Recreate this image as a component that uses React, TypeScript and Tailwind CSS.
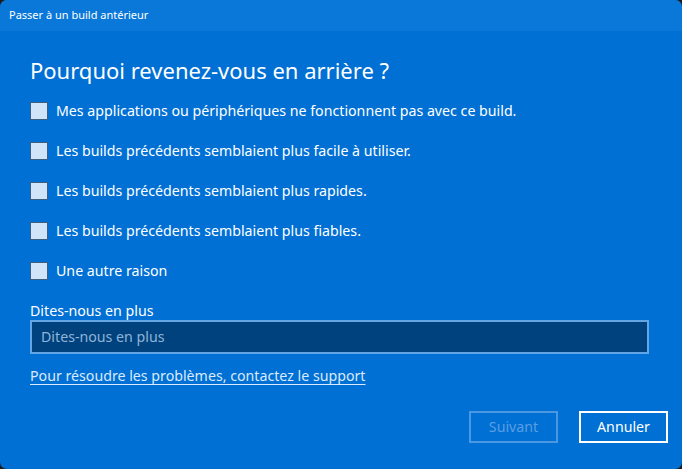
import React from 'react';

const reasons = [
  'Mes applications ou périphériques ne fonctionnent pas avec ce build.',
  'Les builds précédents semblaient plus facile à utiliser.',
  'Les builds précédents semblaient plus rapides.',
  'Les builds précédents semblaient plus fiables.',
  'Une autre raison',
];

export default function App() {
  return (
    <div className="w-[682px] h-[469px] bg-[#1c1c1c] overflow-hidden">
      <div
        className="w-[682px] h-[469px] rounded-[7px] overflow-hidden bg-[#0070d4] text-white flex flex-col"
        style={{ fontFamily: '"Noto Sans", "Open Sans", sans-serif' }}>
        {/* Title bar */}
        <div className="h-[31px] shrink-0 bg-[#0a78d8] flex items-center pl-[9px] text-[11px] text-white">
          Passer à un build antérieur
        </div>

        <div className="flex-1 flex flex-col px-[30px]">
          <h1 className="mt-[24px] text-[22px] leading-[30px] font-normal">
            Pourquoi revenez-vous en arrière ?
          </h1>

          <div className="mt-[16px] flex flex-col gap-[21px]">
            {reasons.map((r) =>
            <label key={r} className="flex items-center gap-[8px] h-[19px]">
                <span className="w-[18px] h-[18px] bg-[#cfe4f8] border border-[#3e5f82] shrink-0" />
                <span className="text-[14.2px] leading-[19px] text-white">{r}</span>
              </label>
            )}
          </div>

          <div className="mt-[22px] text-[14.2px] leading-[18px]">Dites-nous en plus</div>
          <div className="mt-0 w-[619px] h-[34px] bg-[#00427e] border-2 border-[#63a6e6] flex items-center px-[9px] text-[14.2px] text-[#8fb4d8]">
            Dites-nous en plus
          </div>

          <a className="mt-[13px] self-start text-[14.2px] leading-[18px] text-[#dbeaff] underline underline-offset-[3px] decoration-1">
            Pour résoudre les problèmes, contactez le support
          </a>

          <div className="mt-auto mb-[26px] flex justify-end gap-[21px] mr-[-16px]">
            <button className="w-[89px] h-[32px] border-2 border-[#4a98e2] text-[14.2px] text-[#5a9ee3]">
              Suivant
            </button>
            <button className="w-[89px] h-[32px] border-2 border-white text-[14.2px] text-white">
              Annuler
            </button>
          </div>
        </div>
      </div>
    </div>);
}
